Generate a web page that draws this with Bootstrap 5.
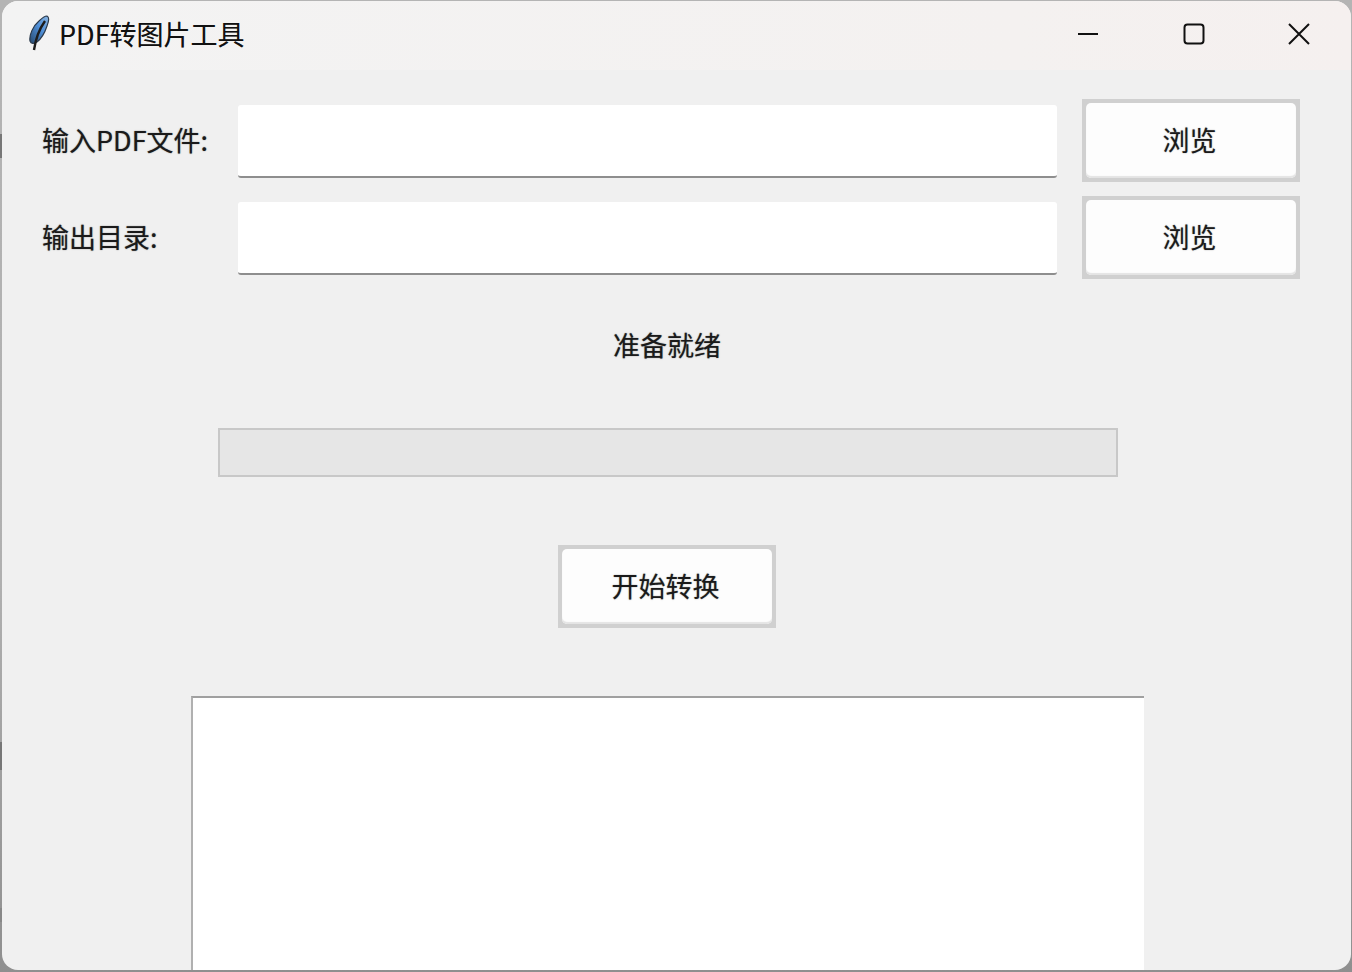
<!doctype html>
<html lang="zh-CN">
<head>
<meta charset="utf-8">
<title>PDF转图片工具</title>
<link href="https://cdn.jsdelivr.net/npm/bootstrap@5.3.0/dist/css/bootstrap.min.css" rel="stylesheet">
<style>
html,body{height:972px;overflow:hidden}
body{font-family:"Noto Sans CJK SC","Noto Sans",sans-serif;color:#1a1a1a;
background:linear-gradient(#777,#777) 0 134px/2px 24px no-repeat,linear-gradient(#777,#777) 0 742px/2px 28px no-repeat,linear-gradient(#888,#888) 0 908px/2px 14px no-repeat,linear-gradient(#b4b4b4,#b0b0b0 60%,#8f8f8f)}
.app-window{width:1349px;height:969px;margin:1px 0 0 2px;background:#f0f0f0;border-radius:16px;overflow:hidden}
.title-strip{height:69px;background:linear-gradient(90deg,#f3f3f3 0%,#f4f1f0 75%,#f5f0ef 100%);padding:0 0 0 25px;margin-right:-1px}
.title-text{font-size:27px;line-height:1;color:#111;margin-left:8px;margin-top:-4px;text-shadow:0 0 .6px rgba(0,0,0,.4)}
.win-btns{margin-left:auto;margin-top:-4px}
.win-btn{width:105.5px;height:69px;display:flex;align-items:center;justify-content:center}
.content-area{padding:29px 0 0 40px}
.file-row{height:83px;margin-bottom:14px}
.field-label{width:196px;font-size:27px;line-height:1;text-shadow:0 0 1.2px rgba(0,0,0,.55);margin-top:-2px}
.path-input{width:819px;height:73px;flex:none;border:0;border-bottom:2px solid #8e8e8e;border-radius:3px;background:#fff;box-shadow:none;margin-top:2px}
.pick-btn{width:218px;height:83px;margin-left:25px;flex:none;padding:4px;background:#d0d0d0;border:0;border-radius:0;font-size:27px;line-height:1;color:#1a1a1a}
.pick-face{display:flex;align-items:center;justify-content:center;height:100%;width:100%;background:#fdfdfd;border-radius:5px;box-shadow:inset 0 -2px 1px #e4e4e4;text-shadow:0 0 1.2px rgba(0,0,0,.5);padding:0 3px 2px 0}
.state-text{width:1250px;text-align:center;font-size:27px;line-height:1;margin-top:-1px;padding-top:39px;text-shadow:0 0 1.2px rgba(0,0,0,.55)}
.bar-track{width:900px;height:49px;margin:70px 0 0 176px;background:#e6e6e6;border:2px solid #c8c8c8;border-radius:0}
.start-btn{width:218px;height:83px;margin:68px 0 0 516px;display:block;padding:4px;background:#d0d0d0;border:0;border-radius:0;font-size:27px;line-height:1;color:#1a1a1a}
.log-box{width:953px;height:300px;margin:68px 0 0 149px;background:#fff;border:0;border-top:2px solid #a0a0a0;border-left:2px solid #b0b0b0;border-radius:0}
</style>
</head>
<body>
<div class="app-window">
  <div class="title-strip d-flex align-items-center">
    <svg width="24" height="37" viewBox="0 0 24 37" aria-hidden="true" class="mb-1">
      <defs><linearGradient id="fg" x1="0" y1="1" x2="1" y2="0"><stop offset="0" stop-color="#27496d"/><stop offset=".55" stop-color="#4f8fd8"/><stop offset="1" stop-color="#8ab4e0"/></linearGradient></defs>
      <path d="M20 1C22 2 22 6 20 11 18 17 14 24 10 27 7 29 4 29 3 26 2 20 6 11 12 6 15 3 18 1 20 1Z" fill="url(#fg)" stroke="#2b3a4c" stroke-width="1.2"/>
      <path d="M18 6C13 13 9 21 7 35" fill="none" stroke="#1c1c1c" stroke-width="2.4"/>
    </svg>
    <span class="title-text">PDF转图片工具</span>
    <div class="win-btns d-flex">
      <div class="win-btn"><svg width="22" height="4" viewBox="0 0 22 4"><path d="M1 2H21" stroke="#111" stroke-width="2"/></svg></div>
      <div class="win-btn"><svg width="22" height="22" viewBox="0 0 22 22"><rect x="1.5" y="1.5" width="19" height="19" rx="3" fill="none" stroke="#111" stroke-width="2"/></svg></div>
      <div class="win-btn"><svg width="22" height="22" viewBox="0 0 22 22"><path d="M1 1L21 21M21 1L1 21" stroke="#111" stroke-width="2"/></svg></div>
    </div>
  </div>
  <div class="content-area">
    <div class="file-row d-flex align-items-center">
      <label class="field-label">输入PDF文件:</label>
      <input class="form-control path-input" type="text">
      <button class="btn pick-btn" type="button"><span class="pick-face">浏览</span></button>
    </div>
    <div class="file-row d-flex align-items-center">
      <label class="field-label">输出目录:</label>
      <input class="form-control path-input" type="text">
      <button class="btn pick-btn" type="button"><span class="pick-face">浏览</span></button>
    </div>
    <div class="state-text">准备就绪</div>
    <div class="progress bar-track"></div>
    <button class="btn start-btn" type="button"><span class="pick-face">开始转换</span></button>
    <div class="log-box"></div>
  </div>
</div>
<script src="https://cdn.jsdelivr.net/npm/bootstrap@5.3.0/dist/js/bootstrap.bundle.min.js"></script>
</body>
</html>
